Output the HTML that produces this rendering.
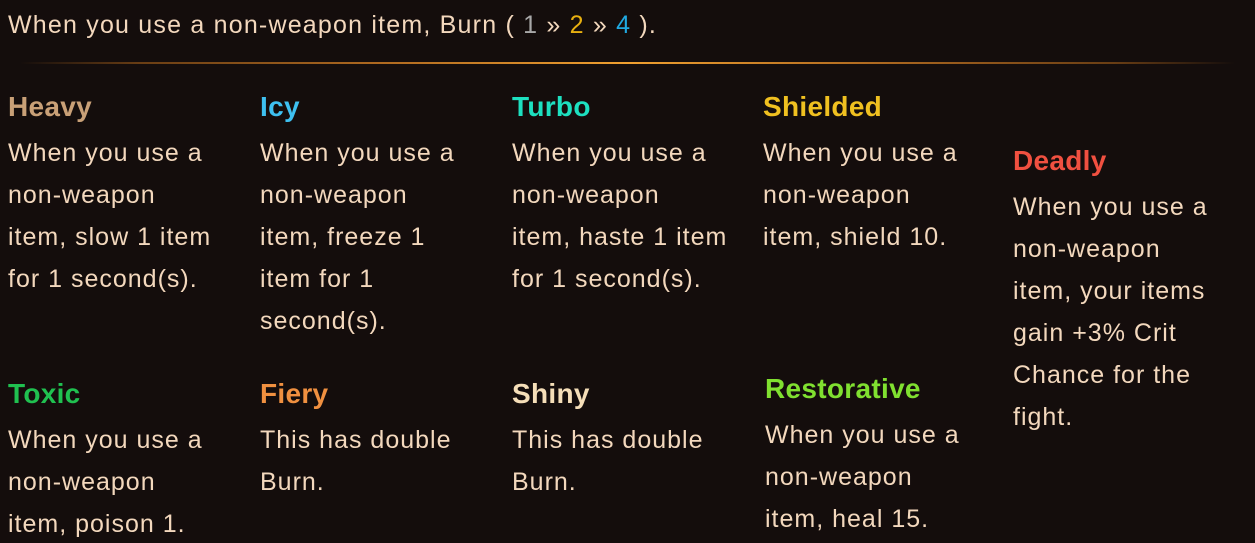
<!DOCTYPE html>
<html><head><style>
html,body{margin:0;padding:0;background:#140d0c;width:1255px;height:543px;overflow:hidden;}
body{font-family:"Liberation Sans",sans-serif;color:#f3d8bd;position:relative;}
.top{position:absolute;left:8px;top:8px;font-size:25px;letter-spacing:1.2px;line-height:34px;white-space:nowrap;}
.line{position:absolute;left:20px;top:62px;width:1215px;height:2px;background:linear-gradient(90deg,rgba(160,90,20,0) 0%,#6a3e14 10%,#b06a20 30%,#f0a030 50%,#b06a20 70%,#6a3e14 90%,rgba(160,90,20,0) 100%);}
.b{position:absolute;width:250px;}
.h{font-size:28px;font-weight:bold;line-height:46px;white-space:nowrap;letter-spacing:0.3px;}
.t{font-size:25px;letter-spacing:1px;line-height:42px;white-space:nowrap;margin-top:2px;}
</style></head><body>
<div class="top">When you use a non-weapon item, Burn ( <span style="color:#a8a8a8">1</span> » <span style="color:#e8b010">2</span> » <span style="color:#20a8e0">4</span> ).</div>
<div class="line"></div>

<div class="b" style="left:8px;top:84px"><div class="h" style="color:#c9a077">Heavy</div><div class="t">When you use a<br>non-weapon<br>item, slow 1 item<br>for 1 second(s).</div></div>
<div class="b" style="left:260px;top:84px"><div class="h" style="color:#3ec0f0">Icy</div><div class="t">When you use a<br>non-weapon<br>item, freeze 1<br>item for 1<br>second(s).</div></div>
<div class="b" style="left:512px;top:84px"><div class="h" style="color:#1de0c0">Turbo</div><div class="t">When you use a<br>non-weapon<br>item, haste 1 item<br>for 1 second(s).</div></div>
<div class="b" style="left:763px;top:84px"><div class="h" style="color:#f0c020">Shielded</div><div class="t">When you use a<br>non-weapon<br>item, shield 10.</div></div>
<div class="b" style="left:1013px;top:138px"><div class="h" style="color:#f05040">Deadly</div><div class="t">When you use a<br>non-weapon<br>item, your items<br>gain +3% Crit<br>Chance for the<br>fight.</div></div>

<div class="b" style="left:8px;top:371px"><div class="h" style="color:#20c050">Toxic</div><div class="t">When you use a<br>non-weapon<br>item, poison 1.</div></div>
<div class="b" style="left:260px;top:371px"><div class="h" style="color:#f09040">Fiery</div><div class="t">This has double<br>Burn.</div></div>
<div class="b" style="left:512px;top:371px"><div class="h" style="color:#f5deb8">Shiny</div><div class="t">This has double<br>Burn.</div></div>
<div class="b" style="left:765px;top:366px"><div class="h" style="color:#80e030">Restorative</div><div class="t">When you use a<br>non-weapon<br>item, heal 15.</div></div>
</body></html>
